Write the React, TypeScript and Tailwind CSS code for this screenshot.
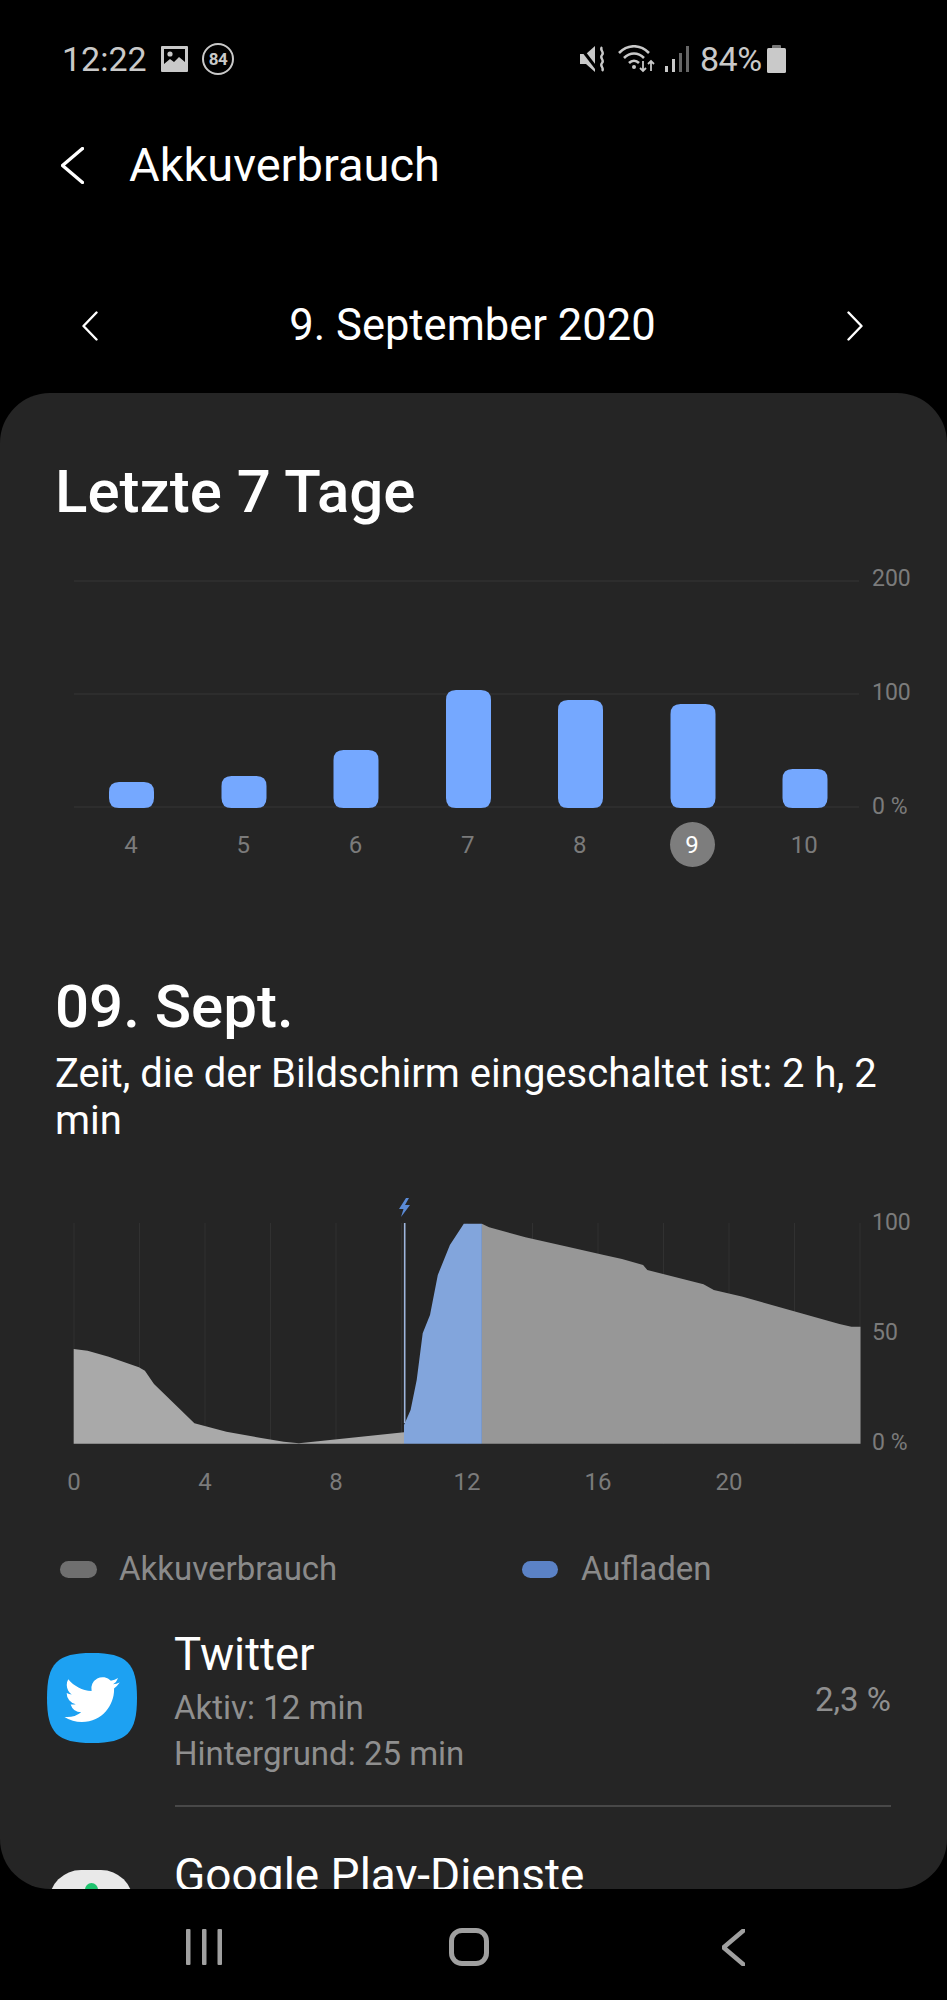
import React from "react";

const bars = [
  { x: 109, top: 782 },
  { x: 221.5, top: 776 },
  { x: 333.5, top: 750 },
  { x: 446, top: 690 },
  { x: 558, top: 700 },
  { x: 670.5, top: 704 },
  { x: 782.5, top: 769 },
];
const pts = (a: number[][]) => a.map(([x, y]) => `${(x / 1.656).toFixed(1)},${(1180 + y / 3).toFixed(1)}`).join(" ");
const greyLeft = pts([[122,507],[145,512],[180,530],[230,562],[240,572],[255,612],[322,730],[375,755],[430,773],[470,785],[495,790],[669,757],[669,791],[122,791]]);
const blue = pts([[669,735],[680,690],[690,600],[700,460],[712,405],[725,285],[745,195],[768,131],[798,131],[798,791],[669,791]]);
const greyRight = pts([[798,131],[810,142],[870,172],[940,200],[1000,225],[1030,237],[1065,255],[1072,270],[1165,313],[1182,330],[1230,350],[1390,432],[1410,440],[1425,440],[1425,791],[798,791]]);

function Chevron({ dir, w, h, sw, color = "#fff" }: { dir: "l" | "r"; w: number; h: number; sw: number; color?: string }) {
  return (
    <svg width={w} height={h} viewBox={`0 0 ${w} ${h}`} fill="none">
      <path d={dir === "l" ? `M${w - 1.5} 1.5 L1.5 ${h / 2} L${w - 1.5} ${h - 1.5}` : `M1.5 1.5 L${w - 1.5} ${h / 2} L1.5 ${h - 1.5}`} stroke={color} strokeWidth={sw} strokeLinecap="round" strokeLinejoin="round" />
    </svg>
  );
}

export default function App() {
  return (
    <div className="w-[947px] h-[2000px] bg-black flex flex-col overflow-hidden font-['Roboto',sans-serif]">
      {/* status bar */}
      <div className="h-[118px] flex items-center text-[#c9c9c9] text-[34px] shrink-0">
        <span className="ml-[62px] w-[99px]">12:22</span>
        <svg width="27" height="26" viewBox="0 0 27 26" className="shrink-0">
          <path fillRule="evenodd" d="M1 0h25a1 1 0 0 1 1 1v24a1 1 0 0 1-1 1H1a1 1 0 0 1-1-1V1a1 1 0 0 1 1-1zM3 3v15l6-5 4 3 5-5 6 5V3z" fill="#c9c9c9" />
          <circle cx="9" cy="8" r="2.6" fill="#c9c9c9" />
        </svg>
        <div className="relative ml-[14px] w-[32px] h-[32px] rounded-full border-2 border-[#c9c9c9] flex items-center justify-center text-[17px] font-bold leading-none tracking-[-0.5px]">84</div>
        <svg width="27" height="26" viewBox="0 0 27 26" className="ml-[346px] shrink-0">
          <path d="M0 8h6l9-8v26l-9-8H0z" fill="#c9c9c9" />
          <path d="M0 1l17 22" stroke="#000" strokeWidth="3" />
          <path d="M22 1c-3 3 3 5 0 8s3 5 0 8 3 5 0 8" stroke="#c9c9c9" strokeWidth="2.4" fill="none" />
        </svg>
        <svg width="38" height="28" viewBox="0 0 38 28" className="ml-[11px] shrink-0" fill="none" stroke="#c9c9c9" strokeWidth="2.6">
          <path d="M1 8c9-9 21-9 30 0" />
          <path d="M6 13c6-6 14-6 20 0" />
          <path d="M11 18c3-3 7-3 10 0" />
          <circle cx="16" cy="22" r="2" fill="#c9c9c9" stroke="none" />
          <path d="M25 16v10M22 23l3 3 3-3M33 26v-10M30 19l3-3 3 3" strokeWidth="1.8" />
        </svg>
        <svg width="25" height="26" viewBox="0 0 25 26" className="ml-[9px] shrink-0">
          <rect x="0" y="20" width="3" height="6" fill="#c9c9c9" />
          <rect x="7" y="13" width="3" height="13" fill="#c9c9c9" />
          <rect x="14" y="7" width="3" height="19" fill="#666" />
          <rect x="21" y="0" width="3" height="26" fill="#666" />
        </svg>
        <span className="ml-[10px] w-[67px] tracking-[-0.5px]">84%</span>
        <svg width="19" height="28" viewBox="0 0 19 28" className="shrink-0">
          <rect x="5" y="0" width="9" height="4" rx="1" fill="#777" />
          <rect x="0" y="3" width="19" height="25" rx="1.5" fill="#c9c9c9" />
        </svg>
      </div>

      {/* header */}
      <div className="h-[94px] flex items-center shrink-0">
        <div className="ml-[61px] w-[68px]"><Chevron dir="l" w={23} h={37} sw={3.4} /></div>
        <span className="text-white text-[47px]">Akkuverbrauch</span>
      </div>

      {/* date */}
      <div className="mt-[47px] h-[134px] flex items-center justify-between pl-[82px] pr-[84px] shrink-0">
        <Chevron dir="l" w={16} h={30} sw={2.4} />
        <span className="text-white text-[43.5px]">9. September 2020</span>
        <Chevron dir="r" w={16} h={30} sw={2.4} />
      </div>

      {/* panel */}
      <div className="h-[1496px] shrink-0 bg-[#252525] rounded-[50px] overflow-hidden">
        <h1 className="ml-[55px] mt-[64px] h-[70px] leading-[70px] text-white text-[60px] font-medium">Letzte 7 Tage</h1>

        <div className="mt-[37px] flex h-[258px]">
          <svg width="860" height="258" viewBox="0 564 860 258" className="shrink-0">
            {[581, 694, 807].map((y) => (
              <line key={y} x1="74" x2="859" y1={y} y2={y} stroke="#363636" strokeWidth="1" />
            ))}
            {bars.map((b) => (
              <path key={b.x} d={`M${b.x} ${b.top + 10}q0-10 10-10h25q10 0 10 10V798q0 10-10 10h-25q-10 0-10-10z`} fill="#75a8ff" />
            ))}
          </svg>
          <div className="ml-[12px] flex flex-col justify-between text-[23px] leading-[30px] text-[#7b7b7b]">
            <span>200</span>
            <span>100</span>
            <span>0 %</span>
          </div>
        </div>

        <div className="flex h-[45px] ml-[75px] text-[24px] text-[#7b7b7b]">
          {["4", "5", "6", "7", "8", "9", "10"].map((d) => (
            <div key={d} className="w-[112.2px] flex items-center justify-center">
              {d === "9" ? (
                <span className="w-[45px] h-[45px] rounded-full bg-[#7d7d7d] text-white flex items-center justify-center">9</span>
              ) : (
                d
              )}
            </div>
          ))}
        </div>

        <h2 className="ml-[55px] mt-[105px] h-[70px] leading-[70px] text-white text-[60px] font-medium">09. Sept.</h2>
        <p className="ml-[55px] mr-[50px] mt-[8px] text-white text-[40px] leading-[47px]">Zeit, die der Bildschirm eingeschaltet ist: 2 h, 2 min</p>

        <div className="mt-[54px] flex h-[260px]">
          <svg width="861" height="260" viewBox="0 1198 861 260" className="shrink-0">
            {[0, 1, 2, 3, 4, 5, 6, 7, 8, 9, 10, 11, 12].map((i) => (
              <line key={i} x1={74 + i * 65.5} x2={74 + i * 65.5} y1="1223" y2="1444" stroke="#313131" strokeWidth="1" />
            ))}
            <polygon points={greyLeft} fill="#a9a9a9" />
            <polygon points={greyRight} fill="#979797" />
            <polygon points={blue} fill="#82a5dc" />
            <line x1="404.7" x2="404.7" y1="1223" y2="1423" stroke="#9fb6dd" strokeWidth="1.6" />
            <path d="M406 1198 L399 1209 L403.5 1209 L401 1217 L410 1205 L405 1205 L409 1198 Z" fill="#5a8ad6" />
          </svg>
          <div className="ml-[11px] mt-[10px] h-[250px] flex flex-col justify-between text-[23px] leading-[30px] text-[#7b7b7b]">
            <span>100</span>
            <span>50</span>
            <span>0 %</span>
          </div>
        </div>

        <div className="mt-[9px] ml-[8.5px] flex h-[30px] leading-[30px] text-[24px] text-[#7b7b7b]">
          {["0", "4", "8", "12", "16", "20"].map((d) => (
            <div key={d} className="w-[131px] text-center">{d}</div>
          ))}
        </div>

        <div className="mt-[52px] flex items-center h-[40px] text-[33px] text-[#8a8a8a]">
          <span className="ml-[60px] w-[37px] h-[17px] rounded-full bg-[#6f6f6f]" />
          <span className="ml-[22px] w-[403px]">Akkuverbrauch</span>
          <span className="w-[36px] h-[17px] rounded-full bg-[#5b82c6]" />
          <span className="ml-[23px]">Aufladen</span>
        </div>

        <div className="mt-[41px] flex pl-[47px]">
          <svg width="90" height="90" viewBox="0 0 90 90" className="mt-[23px] shrink-0">
            <path d="M45 0C80 0 90 10 90 45S80 90 45 90 0 80 0 45 10 0 45 0z" fill="#1da1f2" />
            <g transform="translate(17.5 19) scale(2.3)">
              <path fill="#fff" d="M23.953 4.57a10 10 0 01-2.825.775 4.958 4.958 0 002.163-2.723c-.951.555-2.005.959-3.127 1.184a4.92 4.92 0 00-8.384 4.482C7.69 8.095 4.067 6.13 1.64 3.162a4.822 4.822 0 00-.666 2.475c0 1.71.87 3.213 2.188 4.096a4.904 4.904 0 01-2.228-.616v.06a4.923 4.923 0 003.946 4.827 4.996 4.996 0 01-2.212.085 4.936 4.936 0 004.604 3.417 9.867 9.867 0 01-6.102 2.105c-.39 0-.779-.023-1.17-.067a13.995 13.995 0 007.557 2.209c9.053 0 13.998-7.496 13.998-13.985 0-.21 0-.42-.015-.63A9.935 9.935 0 0024 4.59z" />
            </g>
          </svg>
          <div className="ml-[37px] flex-1">
            <div className="h-[50px] leading-[50px] text-white text-[45.5px]">Twitter</div>
            <div className="mt-[5px] h-[46px] leading-[46px] text-[33px] text-[#8f8f8f]">Aktiv: 12 min</div>
            <div className="h-[46px] leading-[46px] text-[33px] text-[#8f8f8f]">Hintergrund: 25 min</div>
          </div>
          <div className="mt-[50px] mr-[56px] h-[40px] leading-[40px] text-[33px] text-[#8f8f8f]">2,3 %</div>
        </div>

        <div className="mt-[28px] ml-[175px] mr-[56px] h-[2px] bg-[#484848]" />

        <div className="mt-[43px] flex pl-[49px]">
          <div className="mt-[20px] relative w-[84px] h-[84px] rounded-[32px] bg-[#e9e9e9] shrink-0 flex justify-center">
            <span className="mt-[13px] w-[13px] h-[13px] rounded-full bg-[#1fc46f]" />
          </div>
          <div className="ml-[41px] h-[50px] leading-[50px] text-white text-[46px]">Google Play-Dienste</div>
        </div>
      </div>

      {/* nav */}
      <div className="flex-1 flex items-center pt-[5px]">
        <svg width="36" height="36" viewBox="0 0 36 36" className="ml-[186px] shrink-0">
          <rect x="0" y="0" width="4.5" height="36" rx="1" fill="#a0a0a0" />
          <rect x="16" y="0" width="4.5" height="36" rx="1" fill="#a0a0a0" />
          <rect x="31.5" y="0" width="4.5" height="36" rx="1" fill="#a0a0a0" />
        </svg>
        <div className="ml-[227px] w-[40px] h-[38px] rounded-[13px] border-[5px] border-[#a0a0a0]" />
        <div className="ml-[233px]"><Chevron dir="l" w={23} h={37} sw={4.5} color="#a0a0a0" /></div>
      </div>
    </div>
  );
}
